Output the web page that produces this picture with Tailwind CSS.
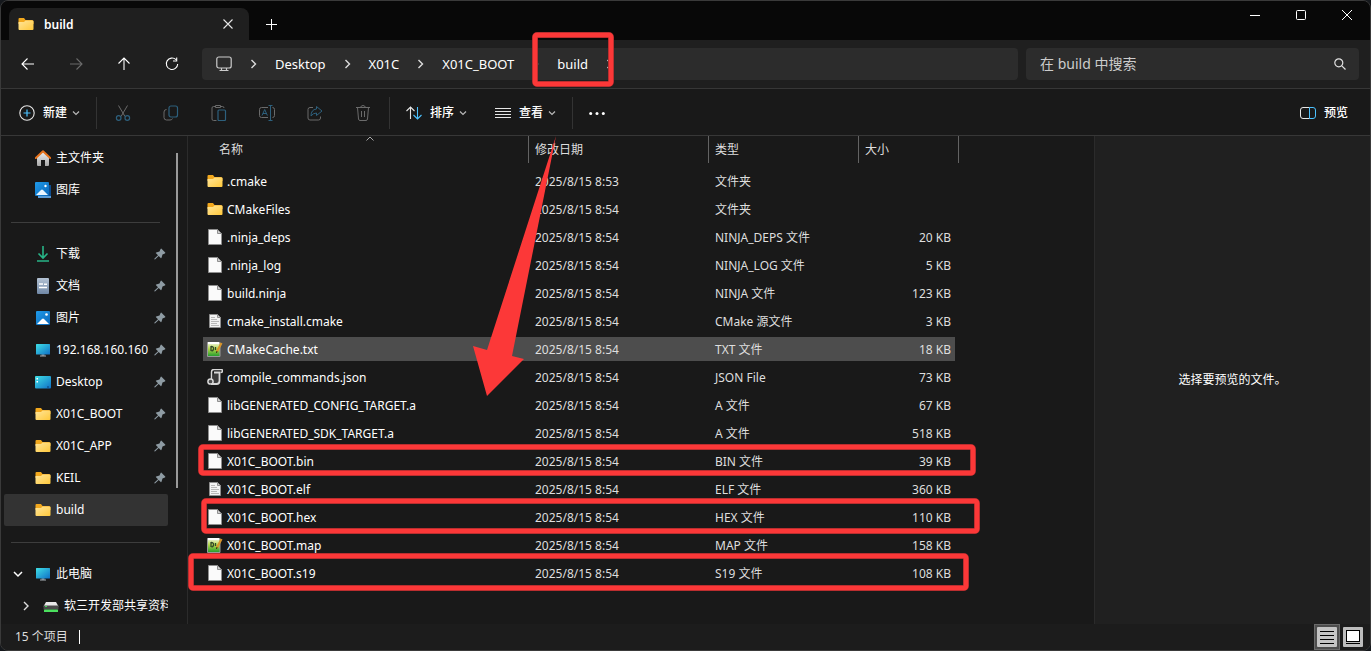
<!DOCTYPE html>
<html lang="zh-CN">
<head>
    <meta charset="UTF-8">
    <meta name="viewport" content="width=device-width, initial-scale=1.0">
    <title>build</title>
    <!-- Tailwind CSS CDN -->
    <script src="https://cdn.jsdelivr.net/npm/@tailwindcss/browser@4"></script>
</head>
<body class="bg-[#15181c] font-['Noto_Sans','Noto_Sans_CJK_SC',sans-serif] text-xs text-white">

    <!-- Shared icons -->
    <svg class="absolute size-0" aria-hidden="true">
        <defs>
            <linearGradient id="gFolder" x1="0" y1="0" x2="1" y2="1">
                <stop offset="0" stop-color="#ffe69c"/><stop offset="1" stop-color="#ffc83a"/>
            </linearGradient>
            <linearGradient id="gBlue" x1="0" y1="0" x2="1" y2="1">
                <stop offset="0" stop-color="#1f9bea"/><stop offset="1" stop-color="#0b66b8"/>
            </linearGradient>
            <linearGradient id="gCyan" x1="0" y1="0" x2="1" y2="1">
                <stop offset="0" stop-color="#3fe0e6"/><stop offset="1" stop-color="#0f6fc6"/>
            </linearGradient>
            <linearGradient id="gGreen" x1="0" y1="0" x2="0" y2="1">
                <stop offset="0" stop-color="#f4f8ea"/><stop offset=".45" stop-color="#b4d84a"/><stop offset="1" stop-color="#1d9a2c"/>
            </linearGradient>
            <linearGradient id="gDoc" x1="0" y1="0" x2="0" y2="1">
                <stop offset="0" stop-color="#b4c3d4"/><stop offset="1" stop-color="#7088a6"/>
            </linearGradient>
            <linearGradient id="gHouse" x1="0" y1="0" x2="0" y2="1">
                <stop offset="0" stop-color="#eeeeee"/><stop offset="1" stop-color="#a8a8a8"/>
            </linearGradient>
        </defs>
        <symbol id="folder" viewBox="0 0 16 16">
            <path d="M.5 3a1 1 0 0 1 1-1H6l1.500 2H14a1.500 1.500 0 0 1 1.500 1.500V8H.5z" fill="#f2a81d"/>
            <path d="M.5 6H6l1.500-1.500h7a1 1 0 0 1 1 1V13a1 1 0 0 1-1 1h-13a1 1 0 0 1-1-1z" fill="url(#gFolder)"/>
        </symbol>
        <symbol id="file" viewBox="0 0 16 16">
            <path d="M1.500.5h9l4 4v11h-13z" fill="#fafafa" stroke="#8f8f8f"/>
            <path d="M10.500.5v4h4z" fill="#cfcfcf" stroke="#8f8f8f"/>
        </symbol>
        <symbol id="textfile" viewBox="0 0 16 16">
            <path d="M2.500 1.500h8l3 3v10h-11z" fill="#f3f3f3" stroke="#8f8f8f"/>
            <path d="M10.500 1.500v3h3z" fill="#cfcfcf" stroke="#8f8f8f"/>
            <path d="M4 4.500h4M4 6.500h6M4 8.500h8M4 10.500h6M4 12.500h8" stroke="#b9b9b9"/>
        </symbol>
        <symbol id="notepad" viewBox="0 0 16 16">
            <path d="M.5 1.500h12.500v14H.5z" fill="url(#gGreen)" stroke="#9a9a9a"/>
            <path d="M1 2h11" stroke="#ffffff" stroke-width="2"/>
            <path d="M4 5v5M4 5.500q3 0 2.500 2.500T4 9.500M8.500 6v3" stroke="#31482a" fill="none" stroke-width="1.300"/>
            <path d="m14.500 2-4.500 8.500" stroke="#d9952b" stroke-width="2.200"/>
            <path d="m10 10-.5 2" stroke="#3a2b12"/>
        </symbol>
        <symbol id="json" viewBox="0 0 16 16">
            <path d="M4.500 12V3q0-2.500 2.500-2.500h7q1.500 0 1.500 1.500t-2 1.500" fill="#1a1a1a" stroke="#d8d8d8" stroke-width="1.500"/>
            <path d="M7 3.500h5.500V12q0 3-3 3H4" fill="#3c3c3c" stroke="#d8d8d8" stroke-width="1.800"/>
            <circle cx="3.500" cy="12.500" r="2.600" fill="#4a4a4a" stroke="#d8d8d8" stroke-width="1.500"/>
        </symbol>
        <symbol id="home" viewBox="0 0 16 16">
            <path d="M2 7 8 2l6 5v8a1 1 0 0 1-1 1h-3v-6H6v6H3a1 1 0 0 1-1-1z" fill="url(#gHouse)"/>
            <path d="M.8 8 8 1.200 15.200 8" fill="none" stroke="#e8731c" stroke-width="2" stroke-linecap="round" stroke-linejoin="round"/>
        </symbol>
        <symbol id="gallery" viewBox="0 0 16 16">
            <path d="M3 3h13v13H3z" fill="#0d4d8f"/>
            <path d="M3 14h13v2H3z" fill="#5b9bd5"/>
            <rect width="14" height="14" rx="1" fill="url(#gBlue)"/>
            <path d="m1 13 5-5q1-1 2 0l5 5z" fill="#e9f5ff"/>
            <circle cx="10.500" cy="4" r="1.200" fill="#fff"/>
        </symbol>
        <symbol id="picture" viewBox="0 0 16 16">
            <rect x="1" y="1" width="14" height="14" rx="1" fill="url(#gBlue)"/>
            <path d="m2 14 5-5q1-1 2 0l5 5z" fill="#ffffff"/>
            <circle cx="11.500" cy="4.500" r="1.300" fill="#fff"/>
        </symbol>
        <symbol id="download" viewBox="0 0 16 16">
            <path d="M8 0v12M3.500 7.500 8 12l4.500-4.500M2 15h12" fill="none" stroke="#27b487" stroke-width="1.600"/>
        </symbol>
        <symbol id="document" viewBox="0 0 16 16">
            <rect x="2" width="12" height="16" rx="1" fill="url(#gDoc)"/>
            <path d="M4 6h4M4 9.500h8" stroke="#ffffff" stroke-width="1.500"/>
            <path d="M9 5.500h3v1.500H9z" fill="#ffffff"/>
        </symbol>
        <symbol id="pc" viewBox="0 0 16 16">
            <path d="M6.500 12h3v2h-3z" fill="#6d7780"/>
            <path d="M5 13.500h6v1H5z" fill="#a8b0b6"/>
            <rect x="1" y="2" width="14" height="10.500" rx=".5" fill="url(#gCyan)"/>
        </symbol>
        <symbol id="desktop" viewBox="0 0 16 16">
            <rect y="2" width="16" height="12.500" rx="1" fill="url(#gCyan)"/>
            <path d="M1.500 4h1.500v1.500H1.500zM1.500 7h1.500v1.500H1.500z" fill="#ffffff"/>
            <path d="M12 13h2" stroke="#0a3f78"/>
        </symbol>
        <symbol id="drive" viewBox="0 0 16 16">
            <path d="M3 4h10l2.500 4.500H.5z" fill="#e8e8e8"/>
            <rect x=".5" y="7.500" width="15" height="4" fill="#4a4a4a"/>
            <path d="M2 8.500h2" stroke="#3ddc55"/>
            <rect x="1" y="11.500" width="14" height="2.500" rx=".5" fill="#4be05e"/>
        </symbol>
        <symbol id="pin" viewBox="0 0 12 12">
            <path d="M7.500.8 11.200 4.500q.5.5-.3.900L8.500 6.500 7.500 9.800q-.3.700-.8.200L4.700 8 1 11.500l-.7-.2.200-.8L4 7.200 2 5.300q-.5-.5.200-.8l3.300-1L6.600 1.100q.4-.8.900-.3z" fill="#8e9ba3"/>
        </symbol>
        <symbol id="down" viewBox="0 0 8 8">
            <path d="m1 2.500 3 3 3-3" fill="none" stroke="#b8b8b8" stroke-width="1.200"/>
        </symbol>
        <symbol id="right" viewBox="0 0 12 12">
            <path d="m4 2 4 4-4 4" fill="none" stroke="#dddddd" stroke-width="1.400"/>
        </symbol>
    </svg>

    <div class="relative flex min-h-screen flex-col overflow-hidden rounded-lg border border-[#3a3a3a] bg-[#191919] leading-4">

        <!-- Title bar -->
        <header class="flex h-[39px] items-end bg-[#080808] pl-2">
            <div class="flex h-8 w-60 items-center rounded-t-lg bg-[#1f1f1f] pr-[11px] pl-[9px]">
                <svg class="size-4"><use href="#folder"/></svg>
                <span class="ml-[10px] flex-1 pt-[2px] font-semibold">build</span>
                <button type="button" aria-label="关闭标签页" class="grid size-5 place-items-center">
                    <svg class="size-[10px]" viewBox="0 0 10 10"><path d="m.5.5 9 9m0-9-9 9" stroke="#e6e6e6" stroke-width="1.100"/></svg>
                </button>
            </div>
            <button type="button" aria-label="新建标签页" class="grid h-8 w-11 place-items-center">
                <svg class="size-[11px]" viewBox="0 0 11 11"><path d="M5.500 0v11M0 5.500h11" stroke="#ffffff"/></svg>
            </button>
            <div class="ml-auto flex self-start">
                <button type="button" aria-label="最小化" class="grid h-7 w-[46px] place-items-center">
                    <svg class="size-[10px]" viewBox="0 0 10 10"><path d="M0 5.500h10" stroke="#ffffff"/></svg>
                </button>
                <button type="button" aria-label="最大化" class="grid h-7 w-[46px] place-items-center">
                    <svg class="size-[10px]" viewBox="0 0 10 10"><rect x=".5" y=".5" width="9" height="9" rx="1" fill="none" stroke="#ffffff"/></svg>
                </button>
                <button type="button" aria-label="关闭" class="grid h-7 w-[46px] place-items-center">
                    <svg class="size-[10px]" viewBox="0 0 10 10"><path d="m0 0 10 10M10 0 0 10" stroke="#ffffff"/></svg>
                </button>
            </div>
        </header>

        <!-- Navigation, address and search -->
        <div class="flex h-[49px] items-center border-b border-[#373737] bg-[#1f1f1f] pr-[11px] pl-[3px] text-[13px]">
            <nav class="mr-[6px] flex">
                <button type="button" aria-label="后退" class="grid h-8 w-12 place-items-center">
                    <svg class="size-[14px]" viewBox="0 0 14 14" fill="none" stroke="#ffffff" stroke-width="1.100"><path d="M1 7h12M6.500 1.500 1 7l5.500 5.500"/></svg>
                </button>
                <button type="button" aria-label="前进" disabled class="grid h-8 w-12 place-items-center">
                    <svg class="size-[14px]" viewBox="0 0 14 14" fill="none" stroke="#6a6a6a" stroke-width="1.100"><path d="M1 7h12M7.500 1.500 13 7l-5.500 5.500"/></svg>
                </button>
                <button type="button" aria-label="向上" class="grid h-8 w-12 place-items-center">
                    <svg class="size-[14px]" viewBox="0 0 14 14" fill="none" stroke="#ffffff" stroke-width="1.100"><path d="M7 13V1M1.500 6.500 7 1l5.500 5.500"/></svg>
                </button>
                <button type="button" aria-label="刷新" class="grid h-8 w-12 place-items-center">
                    <svg class="size-[14px]" viewBox="0 0 14 14" fill="none" stroke="#ffffff" stroke-width="1.100"><path d="M11 2.700A5.700 5.700 0 1 0 12.700 7M11.700.5v3.500H8"/></svg>
                </button>
            </nav>
            <div class="mr-2 flex h-8 flex-1 items-center rounded bg-[#2c2c2c] pl-[14px]">
                <svg class="size-4" viewBox="0 0 16 16" fill="none" stroke="#cccccc" stroke-width="1.200"><rect x=".8" y="1" width="14.400" height="11" rx="2"/><path d="M5.500 12v2.500M10.500 12v2.500M3.500 14.500h9"/></svg>
                <svg class="h-3 w-[43px]"><use href="#right"/></svg>
                <a href="#desktop">Desktop</a>
                <svg class="h-3 w-[43px]"><use href="#right"/></svg>
                <a href="#x01c">X01C</a>
                <svg class="h-3 w-[43px]"><use href="#right"/></svg>
                <a href="#x01c-boot">X01C_BOOT</a>
                <svg class="h-3 w-[43px]"><use href="#right"/></svg>
                <a href="#build">build</a>
                <svg class="h-3 w-[43px]"><use href="#right"/></svg>
            </div>
            <div class="flex h-8 w-[333px] items-center rounded bg-[#2c2c2c] pr-[13px] pl-[14px] text-sm">
                <input type="search" aria-label="搜索" placeholder="在 build 中搜索" class="min-w-0 flex-1 bg-transparent outline-none placeholder:text-[#cccccc]">
                <button type="button" aria-label="开始搜索">
                    <svg class="size-3" viewBox="0 0 12 12" fill="none" stroke="#e0e0e0" stroke-width="1.200"><circle cx="4.800" cy="4.800" r="4"/><path d="m7.800 7.800 3.700 3.700"/></svg>
                </button>
            </div>
        </div>

        <!-- Command bar -->
        <div class="flex h-[47px] items-center border-b border-[#373737] pt-[2px] pr-[22px] font-medium">
            <button type="button" class="flex items-center pl-[18px]">
                <svg class="mr-2 size-4" viewBox="0 0 16 16" fill="none"><circle cx="8" cy="8" r="7.200" stroke="#e6e6e6" stroke-width="1.100"/><path d="M8 4.500v7M4.500 8h7" stroke="#4cc2ff" stroke-width="1.200"/></svg>
                新建
                <svg class="ml-[5px] size-2"><use href="#down"/></svg>
            </button>
            <div class="mr-[2px] ml-4 h-8 w-px bg-[#333333]"></div>
            <button type="button" aria-label="剪切" disabled class="grid h-8 w-12 place-items-center">
                <svg class="size-4" viewBox="0 0 16 16" fill="none"><path d="m3.500.5 6.500 11M12.500.5 6 11.500" stroke="#6b6b6b"/><circle cx="3.700" cy="13" r="2.300" stroke="#2d607d" stroke-width="1.200"/><circle cx="12.300" cy="13" r="2.300" stroke="#2d607d" stroke-width="1.200"/></svg>
            </button>
            <button type="button" aria-label="复制" disabled class="grid h-8 w-12 place-items-center">
                <svg class="size-4" viewBox="0 0 16 16" fill="none"><path d="M3.500 4.500q-2.500 0-2.500 2.500v5.500Q1 15 3.500 15H7q2 0 2.500-1.500" stroke="#6b6b6b"/><rect x="6" y="1" width="8.500" height="11" rx="2" stroke="#2d607d" stroke-width="1.200"/></svg>
            </button>
            <button type="button" aria-label="粘贴" disabled class="grid h-8 w-12 place-items-center">
                <svg class="size-4" viewBox="0 0 16 16" fill="none"><path d="M5.500 15.500H2.500q-1.500 0-1.500-1.500V3q0-1.500 1.500-1.500H4m6 0h1.500Q13 1.500 13 3M4.500.5h5v2h-5z" stroke="#6b6b6b"/><rect x="7" y="5" width="7.500" height="10.500" rx="1" stroke="#2d607d" stroke-width="1.200"/></svg>
            </button>
            <button type="button" aria-label="重命名" disabled class="grid h-8 w-12 place-items-center">
                <svg class="size-4" viewBox="0 0 16 16" fill="none"><path d="M9 2.500H2.500Q.5 2.500.5 4.500v6q0 2 2 2H9m4.500-10q2 0 2 2v6q0 2-2 2" stroke="#6b6b6b"/><path d="M11.500.5v15M9.500.5h4M9.500 15.500h4M3 10.500 5.700 4.500 8.400 10.500M4 8.500h3.500" stroke="#2d607d"/></svg>
            </button>
            <button type="button" aria-label="共享" disabled class="grid h-8 w-12 place-items-center">
                <svg class="size-4" viewBox="0 0 16 16" fill="none"><path d="M6 2.500H3Q1 2.500 1 4.500V13q0 2 2 2h8.500q2 0 2-2v-1.500" stroke="#6b6b6b"/><path d="M9.500 1.500 15 6l-5.500 4.500V8Q6 8 4 11q0-6.500 5.500-7z" stroke="#2d607d" stroke-linejoin="round"/></svg>
            </button>
            <button type="button" aria-label="删除" disabled class="grid h-8 w-12 place-items-center">
                <svg class="size-4" viewBox="0 0 16 16" fill="none" stroke="#6b6b6b"><path d="M1 2.500h14M5.500 2.500Q6 .5 8 .5t2.500 2M2.500 2.500 3.500 14q.2 1.500 1.500 1.500h6q1.300 0 1.500-1.500l1-11.500M6.500 6v6M9.500 6v6"/></svg>
            </button>
            <div class="ml-[2px] h-8 w-px bg-[#333333]"></div>
            <button type="button" class="flex items-center px-4">
                <svg class="mr-2 size-4" viewBox="0 0 16 16" fill="none"><path d="M4.500 14V2M.5 6l4-4 4 4" stroke="#e6e6e6" stroke-width="1.100"/><path d="M11.500 2v12M7.500 10l4 4 4-4" stroke="#4cc2ff" stroke-width="1.100"/></svg>
                排序
                <svg class="ml-[5px] size-2"><use href="#down"/></svg>
            </button>
            <button type="button" class="flex items-center pr-4 pl-3">
                <svg class="mr-2 size-4" viewBox="0 0 16 16" stroke="#e6e6e6"><path d="M0 3.500h16M0 6.500h16M0 9.500h16M0 12.500h16"/></svg>
                查看
                <svg class="ml-[5px] size-2"><use href="#down"/></svg>
            </button>
            <div class="h-8 w-px bg-[#333333]"></div>
            <button type="button" aria-label="更多" class="ml-4">
                <svg class="size-4" viewBox="0 0 16 16" fill="#ffffff"><circle cx="1.700" cy="8.500" r="1.500"/><circle cx="8" cy="8.500" r="1.500"/><circle cx="14.300" cy="8.500" r="1.500"/></svg>
            </button>
            <button type="button" class="ml-auto flex items-center gap-2">
                <svg class="size-4" viewBox="0 0 16 16" fill="none"><path d="M9.500 2.500H3Q.5 2.500.5 5v6Q.5 13.500 3 13.500h6.500" stroke="#e6e6e6"/><path d="M9.500 2.500H13q2.500 0 2.500 2.500v6q0 2.500-2.500 2.500H9.500z" stroke="#4cc2ff"/></svg>
                预览
            </button>
        </div>

        <div class="flex flex-1">

            <!-- Folder tree -->
            <aside class="flex w-[187px] border-r border-[#2b2b2b] pt-[6px] pl-[3px]">
                <ul class="w-41 [&_a]:flex [&_a]:h-8 [&_a]:items-center [&_a]:gap-[5px] [&_a]:pr-[2px] [&_span]:flex-1 [&_span]:whitespace-nowrap [&>li>a:first-child]:pl-[31px]">
                    <li><a href="#home"><svg class="size-4"><use href="#home"/></svg><span>主文件夹</span></a></li>
                    <li><a href="#gallery"><svg class="size-4"><use href="#gallery"/></svg><span>图库</span></a></li>
                    <li class="flex h-8 items-center pr-2 pl-[7px]"><hr class="flex-1 border-[#3d3d3d]"></li>
                    <li><a href="#downloads"><svg class="size-4"><use href="#download"/></svg><span>下载</span><svg class="size-3"><use href="#pin"/></svg></a></li>
                    <li><a href="#documents"><svg class="size-4"><use href="#document"/></svg><span>文档</span><svg class="size-3"><use href="#pin"/></svg></a></li>
                    <li><a href="#pictures"><svg class="size-4"><use href="#picture"/></svg><span>图片</span><svg class="size-3"><use href="#pin"/></svg></a></li>
                    <li><a href="#server"><svg class="size-4"><use href="#pc"/></svg><span>192.168.160.160</span><svg class="size-3"><use href="#pin"/></svg></a></li>
                    <li><a href="#desktop"><svg class="size-4"><use href="#desktop"/></svg><span>Desktop</span><svg class="size-3"><use href="#pin"/></svg></a></li>
                    <li><a href="#x01c-boot"><svg class="size-4"><use href="#folder"/></svg><span>X01C_BOOT</span><svg class="size-3"><use href="#pin"/></svg></a></li>
                    <li><a href="#x01c-app"><svg class="size-4"><use href="#folder"/></svg><span>X01C_APP</span><svg class="size-3"><use href="#pin"/></svg></a></li>
                    <li><a href="#keil"><svg class="size-4"><use href="#folder"/></svg><span>KEIL</span><svg class="size-3"><use href="#pin"/></svg></a></li>
                    <li class="rounded-xs bg-[#333333]"><a href="#build"><svg class="size-4"><use href="#folder"/></svg><span>build</span></a></li>
                    <li class="flex h-8 items-center pr-2 pl-[7px]"><hr class="flex-1 border-[#3d3d3d]"></li>
                    <li class="flex overflow-hidden">
                        <button type="button" aria-label="折叠" class="w-[31px] shrink-0 pl-2">
                            <svg class="size-3" viewBox="0 0 12 12"><path d="m2 4 4 4 4-4" fill="none" stroke="#ffffff" stroke-width="1.500"/></svg>
                        </button>
                        <a href="#this-pc"><svg class="size-4"><use href="#pc"/></svg><span>此电脑</span></a>
                    </li>
                    <li class="flex overflow-hidden">
                        <button type="button" aria-label="展开" class="w-[39px] shrink-0 pl-4">
                            <svg class="size-3"><use href="#right"/></svg>
                        </button>
                        <a href="#share"><svg class="size-4 shrink-0"><use href="#drive"/></svg><span>软三开发部共享资料</span></a>
                    </li>
                </ul>
                <div class="mt-[11px] ml-2 h-[335px] w-[2px] bg-[#9a9a9a]"></div>
            </aside>

            <!-- File list -->
            <main class="flex-1 pl-[15px]">
                <table class="w-[756px] table-fixed border-separate border-spacing-0 text-left [&_td]:h-7 [&_td]:border-y-2 [&_td]:border-transparent [&_td]:bg-clip-padding [&_td]:pt-[2px] [&_td]:pl-[6px] [&_td]:text-[#dedede] [&_td:first-child]:pl-1 [&_td:first-child]:text-white [&_td:last-child]:border-r-4 [&_td:last-child]:pr-1 [&_td:last-child]:text-right [&_td_svg]:-mt-[2px]">
                    <thead class="text-[#dedede] [&_div]:mb-1 [&_div]:flex [&_div]:h-[27px] [&_div]:items-center [&_div]:border-r [&_div]:border-[#636363] [&_th]:font-normal">
                        <tr>
                            <th class="relative w-[326px]">
                                <div class="pl-4">名称</div>
                                <svg class="absolute top-0 left-1/2 h-[5px] w-2" viewBox="0 0 8 5"><path d="m.5 4.500 3.500-3.500 3.500 3.500" fill="none" stroke="#a8a8a8"/></svg>
                            </th>
                            <th class="w-[180px]"><div class="pl-[6px]">修改日期</div></th>
                            <th class="w-[150px]"><div class="pl-[6px]">类型</div></th>
                            <th class="w-[100px]"><div class="pl-[6px]">大小</div></th>
                        </tr>
                    </thead>
                    <tbody>
                        <tr><td><span class="flex items-center gap-1"><svg class="size-4"><use href="#folder"/></svg>.cmake</span></td><td>2025/8/15 8:53</td><td>文件夹</td><td></td></tr>
                        <tr><td><span class="flex items-center gap-1"><svg class="size-4"><use href="#folder"/></svg>CMakeFiles</span></td><td>2025/8/15 8:54</td><td>文件夹</td><td></td></tr>
                        <tr><td><span class="flex items-center gap-1"><svg class="size-4"><use href="#file"/></svg>.ninja_deps</span></td><td>2025/8/15 8:54</td><td>NINJA_DEPS 文件</td><td>20 KB</td></tr>
                        <tr><td><span class="flex items-center gap-1"><svg class="size-4"><use href="#file"/></svg>.ninja_log</span></td><td>2025/8/15 8:54</td><td>NINJA_LOG 文件</td><td>5 KB</td></tr>
                        <tr><td><span class="flex items-center gap-1"><svg class="size-4"><use href="#file"/></svg>build.ninja</span></td><td>2025/8/15 8:54</td><td>NINJA 文件</td><td>123 KB</td></tr>
                        <tr><td><span class="flex items-center gap-1"><svg class="size-4"><use href="#textfile"/></svg>cmake_install.cmake</span></td><td>2025/8/15 8:54</td><td>CMake 源文件</td><td>3 KB</td></tr>
                        <tr class="[&_td]:bg-[#4d4d4d]"><td><span class="flex items-center gap-1"><svg class="size-4"><use href="#notepad"/></svg>CMakeCache.txt</span></td><td>2025/8/15 8:54</td><td>TXT 文件</td><td>18 KB</td></tr>
                        <tr><td><span class="flex items-center gap-1"><svg class="size-4"><use href="#json"/></svg>compile_commands.json</span></td><td>2025/8/15 8:54</td><td>JSON File</td><td>73 KB</td></tr>
                        <tr><td><span class="flex items-center gap-1"><svg class="size-4"><use href="#file"/></svg>libGENERATED_CONFIG_TARGET.a</span></td><td>2025/8/15 8:54</td><td>A 文件</td><td>67 KB</td></tr>
                        <tr><td><span class="flex items-center gap-1"><svg class="size-4"><use href="#file"/></svg>libGENERATED_SDK_TARGET.a</span></td><td>2025/8/15 8:54</td><td>A 文件</td><td>518 KB</td></tr>
                        <tr><td><span class="flex items-center gap-1"><svg class="size-4"><use href="#file"/></svg>X01C_BOOT.bin</span></td><td>2025/8/15 8:54</td><td>BIN 文件</td><td>39 KB</td></tr>
                        <tr><td><span class="flex items-center gap-1"><svg class="size-4"><use href="#textfile"/></svg>X01C_BOOT.elf</span></td><td>2025/8/15 8:54</td><td>ELF 文件</td><td>360 KB</td></tr>
                        <tr><td><span class="flex items-center gap-1"><svg class="size-4"><use href="#file"/></svg>X01C_BOOT.hex</span></td><td>2025/8/15 8:54</td><td>HEX 文件</td><td>110 KB</td></tr>
                        <tr><td><span class="flex items-center gap-1"><svg class="size-4"><use href="#notepad"/></svg>X01C_BOOT.map</span></td><td>2025/8/15 8:54</td><td>MAP 文件</td><td>158 KB</td></tr>
                        <tr><td><span class="flex items-center gap-1"><svg class="size-4"><use href="#file"/></svg>X01C_BOOT.s19</span></td><td>2025/8/15 8:54</td><td>S19 文件</td><td>108 KB</td></tr>
                    </tbody>
                </table>
            </main>

            <!-- Preview pane -->
            <section class="grid w-[276px] place-items-center border-l border-[#2b2b2b] bg-[#202020]">
                <p>选择要预览的文件。</p>
            </section>
        </div>

        <!-- Status bar -->
        <footer class="flex h-[26px] items-center bg-[#1c1c1c] pr-[7px] pl-[14px] text-[#dedede]">
            <span>15 个项目</span>
            <div class="ml-[11px] h-[14px] w-px bg-[#ffffff]"></div>
            <button type="button" aria-label="详细信息" class="ml-auto grid size-[26px] place-items-center border border-[#6a6a6a] bg-[#4d4d4d]">
                <svg class="size-5" viewBox="0 0 20 20"><rect width="20" height="20" rx="1" fill="#c4c4c4"/><path d="M3 4.500h14M3 8.500h14M3 12.500h14M3 16.500h14" stroke="#000000"/></svg>
            </button>
            <button type="button" aria-label="大缩略图" class="ml-[3px]">
                <svg class="size-5" viewBox="0 0 20 20"><rect width="20" height="20" rx="1" fill="#bdbdbd"/><rect x="3.500" y="3.500" width="13" height="11" fill="#ffffff" stroke="#000000"/><path d="M3 16.500h14" stroke="#000000"/></svg>
            </button>
        </footer>

        <!-- Red markers -->
        <svg class="pointer-events-none absolute -top-px -left-px h-[620px] w-[1000px]" viewBox="0 0 1000 620" fill="none">
            <g stroke="#7a2426" stroke-width="6">
                <rect x="535" y="35" width="76" height="49" rx="2"/>
                <rect x="201" y="447" width="772" height="26" rx="2"/>
                <rect x="204" y="501" width="773" height="30" rx="2"/>
                <rect x="191" y="556" width="775" height="32" rx="2"/>
            </g>
            <g stroke="#fc3838" stroke-width="5">
                <rect x="535" y="35" width="76" height="49" rx="2"/>
                <rect x="201" y="447" width="772" height="26" rx="2"/>
                <rect x="204" y="501" width="773" height="30" rx="2"/>
                <rect x="191" y="556" width="775" height="32" rx="2"/>
            </g>
            <path d="M556 136 512 356l12 3-37 37-14-50 14 4z" fill="#fc3838"/>
        </svg>
    </div>
</body>
</html>
